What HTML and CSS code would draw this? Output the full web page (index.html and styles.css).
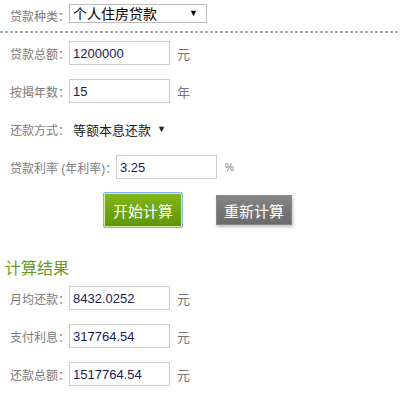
FILE: index.html
```html
<!DOCTYPE html>
<html lang="zh-CN">
<head>
    <meta charset="UTF-8">
    <title>房贷计算器</title>
    <link rel="stylesheet" href="styles.css">
</head>
<body>
    <div class="loan-type">
        <span class="label">贷款种类：</span>
        <div class="type-select">
            <span>个人住房贷款</span>
            <span class="arrow">▼</span>
        </div>
    </div>

    <div class="calc-form">
        <div class="row">
            <span class="label">贷款总额：</span>
            <input class="field" type="text" value="1200000">
            <span class="unit">元</span>
        </div>
        <div class="row">
            <span class="label">按揭年数：</span>
            <input class="field" type="text" value="15">
            <span class="unit">年</span>
        </div>
        <div class="row">
            <span class="label">还款方式：</span>
            <span class="method">等额本息还款</span>
            <span class="method-arrow">▼</span>
        </div>
        <div class="row">
            <span class="label label-wide">贷款利率 (年利率)：</span>
            <input class="field" type="text" value="3.25">
            <span class="unit unit-small">%</span>
        </div>

        <div class="buttons">
            <button class="btn btn-start">开始计算</button>
            <button class="btn btn-reset">重新计算</button>
        </div>
    </div>

    <div class="result">
        <h2 class="result-title">计算结果</h2>
        <div class="row">
            <span class="label">月均还款：</span>
            <input class="field" type="text" value="8432.0252">
            <span class="unit">元</span>
        </div>
        <div class="row">
            <span class="label">支付利息：</span>
            <input class="field" type="text" value="317764.54">
            <span class="unit">元</span>
        </div>
        <div class="row">
            <span class="label">还款总额：</span>
            <input class="field" type="text" value="1517764.54">
            <span class="unit">元</span>
        </div>
    </div>
</body>
</html>
```

FILE: styles.css
```css
body {
    margin: 0;
    background: #fff;
    font-family: "Liberation Sans", "Noto Sans CJK SC", sans-serif;
    font-size: 12px;
    color: #666;
}

.label {
    width: 59px;
    color: #7a7a7a;
    white-space: nowrap;
}

.label-wide {
    width: 106px;
}

/* top selector */
.loan-type {
    display: flex;
    align-items: center;
    height: 31px;
    padding-left: 10px;
    background-image: repeating-linear-gradient(to right, #aaa 0 3px, transparent 3px 5px);
    background-size: 100% 2px;
    background-position: 0 bottom;
    background-repeat: no-repeat;
    padding-bottom: 2px;
}

.type-select {
    display: flex;
    align-items: center;
    justify-content: space-between;
    box-sizing: border-box;
    width: 138px;
    height: 19px;
    margin-top: -5px;
    padding: 0 8px 0 3px;
    border: 1px solid #bbb;
    font-size: 14px;
    color: #000;
}

.type-select .arrow {
    font-size: 9px;
}

/* form rows */
.calc-form {
    padding: 8px 0 0 10px;
}

.row {
    display: flex;
    align-items: center;
    height: 24px;
    margin-bottom: 14px;
}

.field {
    box-sizing: border-box;
    width: 101px;
    height: 24px;
    margin: 0;
    padding: 0 3px;
    border: 1px solid #ccc;
    font-family: "Liberation Sans", sans-serif;
    font-size: 13px;
    color: #1a1a50;
    outline: none;
}

.unit {
    margin-left: 7px;
    font-size: 13px;
    color: #777;
}

.unit-small {
    margin-left: 8px;
    font-size: 10px;
}

.method {
    margin-left: 4px;
    font-size: 13px;
    color: #222;
}

.method-arrow {
    margin-left: 6px;
    font-size: 9px;
    color: #222;
}

/* buttons */
.buttons {
    display: flex;
    align-items: center;
    padding-left: 93px;
    gap: 33px;
    margin-top: -1px;
}

.btn {
    box-sizing: border-box;
    margin: 0;
    font-family: "Noto Sans CJK SC", sans-serif;
    font-size: 15px;
    color: #fff;
    cursor: pointer;
}

.btn-start {
    width: 80px;
    height: 36px;
    border: 1px solid #7fb0f5;
    border-radius: 2px;
    background: linear-gradient(#82b71a, #5f9606);
    box-shadow: inset 0 0 0 1px #d6ecae;
}

.btn-reset {
    width: 76px;
    height: 30px;
    border: 1px solid #888;
    background: linear-gradient(#858585, #6a6a6a);
    box-shadow: 1px 2px 3px rgba(0, 0, 0, 0.25);
}

/* results */
.result {
    padding: 29px 0 0 10px;
}

.result-title {
    margin: 0 0 9px -5px;
    font-family: "Noto Sans CJK SC", sans-serif;
    font-size: 16px;
    font-weight: normal;
    line-height: 20px;
    color: #6a9a20;
}
```
